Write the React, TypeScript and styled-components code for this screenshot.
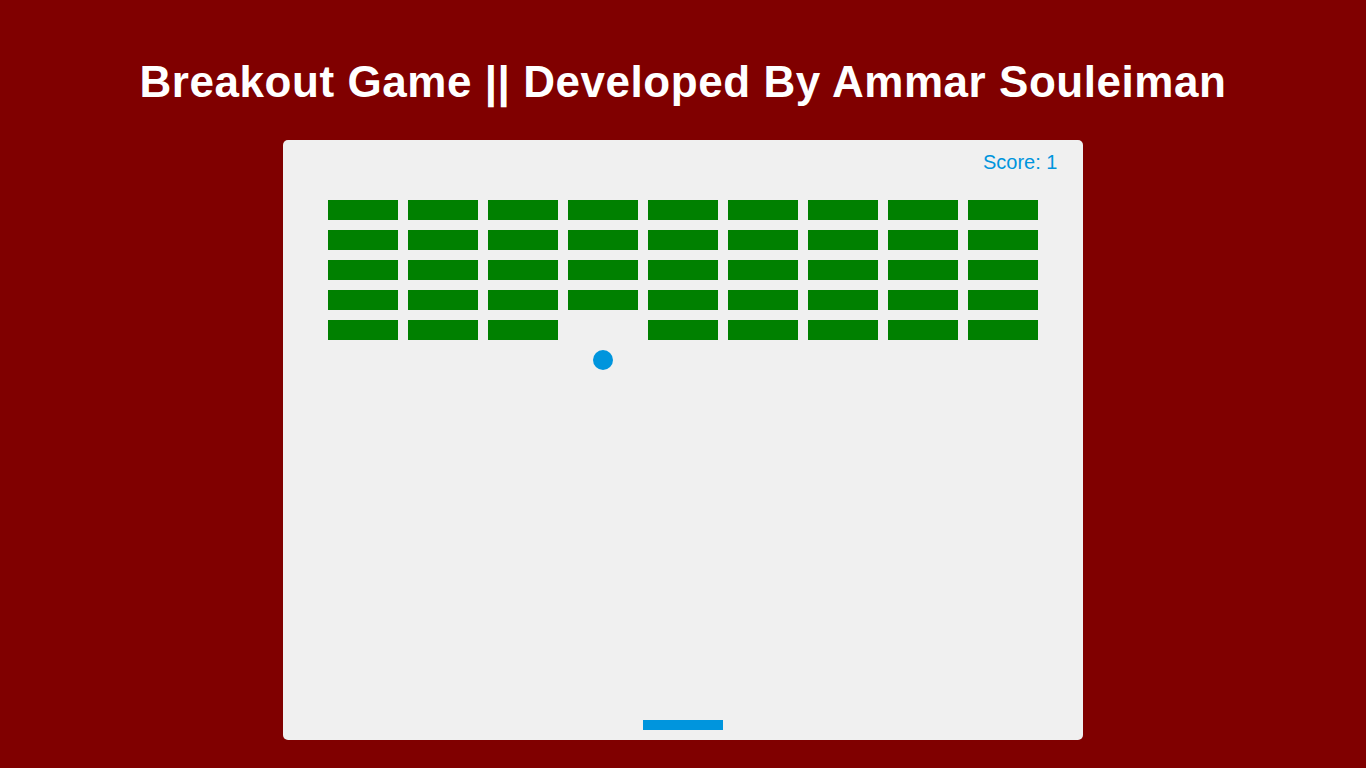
import React from "react";
import styled, { createGlobalStyle } from "styled-components";

const COLS = 9;
const ROWS = 5;
// bricks already hit: [row, col]
const broken = [[4, 3]];

const GlobalStyle = createGlobalStyle`
  html, body {
    margin: 0;
    padding: 0;
    background-color: #800000;
  }
  body {
    font-family: "Liberation Sans", Arial, sans-serif;
  }
`;

const Page = styled.div`
  display: flex;
  flex-direction: column;
  align-items: center;
  min-height: 768px;
`;

const Title = styled.h1`
  margin: 57px 0 33px;
  font-size: 44px;
  font-weight: bold;
  line-height: 50px;
  letter-spacing: 0.55px;
  color: #ffffff;
  text-align: center;
`;

const Board = styled.div`
  position: relative;
  width: 800px;
  height: 600px;
  box-sizing: border-box;
  padding: 60px 45px 0;
  background-color: #f0f0f0;
  border-radius: 5px;
`;

const Score = styled.div`
  position: absolute;
  left: 700px;
  top: 12px;
  font-size: 20px;
  line-height: 20px;
  color: #0095dd;
`;

const Bricks = styled.div`
  display: grid;
  grid-template-columns: repeat(${COLS}, 70px);
  grid-auto-rows: 20px;
  column-gap: 10px;
  row-gap: 10px;
`;

const Brick = styled.div<{ $hidden?: boolean }>`
  background-color: ${(p) => (p.$hidden ? "transparent" : "#008000")};
`;

const Ball = styled.div`
  position: absolute;
  left: 310px;
  top: 210px;
  width: 20px;
  height: 20px;
  border-radius: 50%;
  background-color: #0095dd;
`;

const Paddle = styled.div`
  position: absolute;
  left: 360px;
  top: 580px;
  width: 80px;
  height: 10px;
  background-color: #0095dd;
`;

export default function App() {
  const cells = [];
  for (let r = 0; r < ROWS; r++) {
    for (let c = 0; c < COLS; c++) {
      const gone = broken.some(([br, bc]) => br === r && bc === c);
      cells.push(<Brick key={`${r}-${c}`} $hidden={gone} />);
    }
  }

  return (
    <>
      <GlobalStyle />
      <Page>
        <Title>Breakout Game || Developed By Ammar Souleiman</Title>
        <Board>
          <Score>Score: 1</Score>
          <Bricks>{cells}</Bricks>
          <Ball />
          <Paddle />
        </Board>
      </Page>
    </>
  );
}
